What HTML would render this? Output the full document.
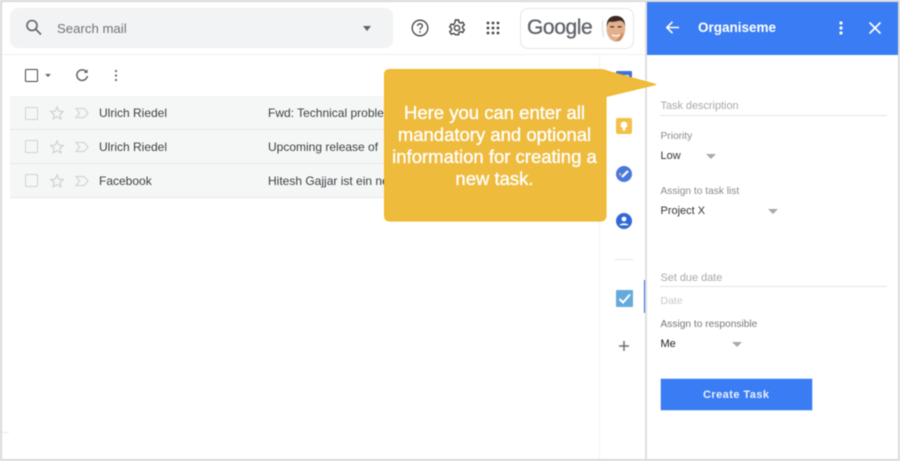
<!DOCTYPE html>
<html>
<head>
<meta charset="utf-8">
<style>
html,body{margin:0;padding:0;background:#fff}
#p{position:relative;width:900px;height:461px;overflow:hidden;background:#fff;font-family:"Liberation Sans",sans-serif;filter:blur(.45px)}
.a{position:absolute}
.t{position:absolute;white-space:nowrap;line-height:16px}
svg{position:absolute;overflow:visible}
.row{position:absolute;left:10px;width:590px;height:33px;background:#f5f7f7;border-bottom:1px solid #e6e8e8}
.m{font-size:12px;color:#3c4043;letter-spacing:0}
.l{font-size:10.2px;color:#8b8b8b;letter-spacing:0}
.v{font-size:11px;color:#333}
.ph{font-size:10.9px;color:#a8a8a8;letter-spacing:0}
.line{position:absolute;left:660px;width:227px;height:1px;background:#e4e4e4}
.tri{position:absolute;width:0;height:0;border-left:5px solid transparent;border-right:5px solid transparent;border-top:5px solid #a9a9a9}
</style>
</head>
<body>
<div id="p">
  <!-- search -->
  <div class="a" style="left:10px;top:8px;width:383px;height:40px;background:#f1f3f4;border-radius:8px"></div>
  <svg style="left:24px;top:17px" width="20" height="20" viewBox="0 0 20 20" fill="none" stroke="#5f6368" stroke-width="1.6"><circle cx="8" cy="8.5" r="5"/><path d="M11.7 12.2L17 17.5"/></svg>
  <div class="t" style="left:57px;top:20.500px;font-size:13.200px;color:#70757a">Search mail</div>
  <div class="tri" style="left:363px;top:26px;border-top-color:#5f6368;border-left-width:4.5px;border-right-width:4.5px"></div>

  <!-- top icons -->
  <svg style="left:410px;top:18px" width="20" height="20" viewBox="0 0 20 20" fill="none" stroke="#444" stroke-width="1.3"><circle cx="10" cy="10" r="7.8"/><path d="M7.5 8C7.5 6.5 8.7 5.8 10 5.8S12.4 6.7 12.4 8C12.4 9.8 10 9.800 10 11.800"/><path d="M10 13.2v1.6"/></svg>
  <svg style="left:447px;top:18px" width="20" height="20" viewBox="0 0 20 20" fill="none" stroke="#444" stroke-width="1.4"><circle cx="10" cy="10" r="2.6"/><path d="M8.4 2h3.2l.4 2.3 1.5.8 2.2-.9 1.6 2.8-1.8 1.5v1.7l1.8 1.5-1.6 2.8-2.2-.9-1.5.8-.4 2.3H8.4L8 16.2l-1.5-.8-2.2.9-1.6-2.8 1.8-1.5V10.300L2.7 8.800l1.6-2.8 2.2.9L8 4.300z"/></svg>
  <svg style="left:486px;top:21px" width="14" height="14" viewBox="0 0 14 14" fill="#444"><circle cx="2" cy="2" r="1.4"/><circle cx="7" cy="2" r="1.4"/><circle cx="12" cy="2" r="1.4"/><circle cx="2" cy="7" r="1.4"/><circle cx="7" cy="7" r="1.4"/><circle cx="12" cy="7" r="1.4"/><circle cx="2" cy="12" r="1.4"/><circle cx="7" cy="12" r="1.4"/><circle cx="12" cy="12" r="1.4"/></svg>

  <!-- account -->
  <div class="a" style="left:520px;top:8px;width:112px;height:39px;border:1px solid #e6e6e6;border-radius:8px;box-sizing:content-box"></div>
  <div class="t" style="left:527px;top:14px;font-size:21px;line-height:27px;color:#5f6368;letter-spacing:-.4px;-webkit-text-stroke:.3px #5f6368">Google</div>
  <svg style="left:601px;top:15px" width="26" height="28" viewBox="0 0 26 30">
    <path d="M1 6Q0 14 2 24" stroke="#e4e4e4" stroke-width="1.5" fill="none"/>
    <ellipse cx="15" cy="15" rx="10" ry="13.5" fill="#e2b08c"/>
    <path d="M5 13Q5 1 15 1T25 13Q24 6 19 6 12 8 8 7 6 9 5 13Z" fill="#3a2a22"/>
    <path d="M22 18Q24 24 19 28L14 28Q20 24 22 18Z" fill="#c98a5c"/>
    <rect x="9" y="12" width="4" height="1.4" fill="#4a3024"/><rect x="17" y="12" width="4" height="1.4" fill="#4a3024"/>
    <path d="M11 21Q15 24 19 21" stroke="#fff" stroke-width="1.4" fill="none"/>
  </svg>

  <!-- dividers -->
  <div class="a" style="left:2px;top:54px;width:645px;height:1px;background:#efefef"></div>
  <div class="a" style="left:599px;top:55px;width:1px;height:406px;background:#f1f1f1"></div>
  <div class="a" style="left:2px;top:432px;width:7px;height:1px;background:#ececec"></div>

  <!-- toolbar -->
  <div class="a" style="left:25px;top:69px;width:10.5px;height:10.5px;border:1.4px solid #444;border-radius:1.5px"></div>
  <div class="tri" style="left:45px;top:74px;border-left-width:3.5px;border-right-width:3.5px;border-top-width:3.5px;border-top-color:#5f6368"></div>
  <svg style="left:75px;top:68px" width="14" height="14" viewBox="0 0 14 14" fill="none" stroke="#5f6368" stroke-width="1.5"><path d="M11.6 4.2A5.3 5.3 0 1 0 12.4 8"/><path d="M12.6 1.2V5H8.8" fill="#5f6368" stroke="none"/></svg>
  <svg style="left:114px;top:69px" width="4" height="14" viewBox="0 0 4 14" fill="#5f6368"><circle cx="2" cy="2" r="1.1"/><circle cx="2" cy="6.5" r="1.1"/><circle cx="2" cy="11" r="1.1"/></svg>

  <!-- rows -->
  <div class="row" style="top:96px"></div>
  <div class="row" style="top:130px"></div>
  <div class="row" style="top:164px"></div>

  <div class="a" style="left:25px;top:107px;width:10.5px;height:10.5px;border:1.3px solid #cfd1d2;border-radius:1.5px"></div>
  <div class="a" style="left:25px;top:140px;width:10.5px;height:10.5px;border:1.3px solid #cfd1d2;border-radius:1.5px"></div>
  <div class="a" style="left:25px;top:174px;width:10.5px;height:10.5px;border:1.3px solid #cfd1d2;border-radius:1.5px"></div>

  <svg style="left:50px;top:106px" width="14" height="14" viewBox="0 0 14 14" fill="none" stroke="#cfd1d2" stroke-width="1.2"><path d="M7 1l1.8 4.1 4.5.4-3.4 3 1 4.4L7 10.6l-3.9 2.3 1-4.4-3.4-3 4.5-.4z"/></svg>
  <svg style="left:50px;top:140px" width="14" height="14" viewBox="0 0 14 14" fill="none" stroke="#cfd1d2" stroke-width="1.2"><path d="M7 1l1.8 4.1 4.5.4-3.4 3 1 4.4L7 10.6l-3.9 2.3 1-4.4-3.4-3 4.5-.4z"/></svg>
  <svg style="left:50px;top:174px" width="14" height="14" viewBox="0 0 14 14" fill="none" stroke="#cfd1d2" stroke-width="1.2"><path d="M7 1l1.8 4.1 4.5.4-3.4 3 1 4.4L7 10.6l-3.9 2.3 1-4.4-3.4-3 4.5-.4z"/></svg>

  <svg style="left:75px;top:107px" width="14" height="12" viewBox="0 0 14 12" fill="none" stroke="#d2d4d5" stroke-width="1.2"><path d="M1 1.5h8L13 6l-4 4.5H1L4.5 6z"/></svg>
  <svg style="left:75px;top:141px" width="14" height="12" viewBox="0 0 14 12" fill="none" stroke="#d2d4d5" stroke-width="1.2"><path d="M1 1.5h8L13 6l-4 4.5H1L4.5 6z"/></svg>
  <svg style="left:75px;top:175px" width="14" height="12" viewBox="0 0 14 12" fill="none" stroke="#d2d4d5" stroke-width="1.2"><path d="M1 1.5h8L13 6l-4 4.5H1L4.5 6z"/></svg>

  <div class="t m" style="left:99px;top:105px">Ulrich Riedel</div>
  <div class="t m" style="left:99px;top:139px">Ulrich Riedel</div>
  <div class="t m" style="left:99px;top:172.500px">Facebook</div>
  <div class="t m" style="left:268px;top:105px">Fwd: Technical problem</div>
  <div class="t m" style="left:268px;top:139px">Upcoming release of</div>
  <div class="t m" style="left:268px;top:172.500px">Hitesh Gajjar ist ein neuer</div>

  <!-- side icons -->
  <div class="a" style="left:616px;top:71px;width:16px;height:16px;background:#3f72d8;border-radius:1px"></div>
  <div class="a" style="left:619px;top:75px;width:10px;height:9px;background:#dfe8fa"></div>
  <div class="a" style="left:616px;top:118px;width:16px;height:16px;background:#f3c048;border-radius:2px"></div>
  <svg style="left:616px;top:118px" width="16" height="16" viewBox="0 0 16 16" fill="#fff"><circle cx="8" cy="7" r="3.4"/><rect x="6.5" y="10.5" width="3" height="2"/></svg>
  <svg style="left:616px;top:166px" width="16" height="16" viewBox="0 0 16 16"><circle cx="8" cy="8" r="8" fill="#4a78e0"/><path d="M6 11L12 5" stroke="#fff" stroke-width="2.2"/><circle cx="4.2" cy="8.2" r="1.2" fill="#f3c048"/></svg>
  <svg style="left:616px;top:213px" width="16" height="16" viewBox="0 0 16 16"><circle cx="8" cy="8" r="8" fill="#2f68d8"/><circle cx="8" cy="6" r="2.4" fill="#fff"/><path d="M3.6 12.2C4 9.8 12 9.800 12.4 12.2z" fill="#fff"/></svg>
  <div class="a" style="left:615px;top:259px;width:18px;height:1px;background:#e3e3e3"></div>
  <div class="a" style="left:616px;top:290px;width:17px;height:17px;background:#64aadb;border-radius:1px"></div>
  <svg style="left:616px;top:290px" width="17" height="17" viewBox="0 0 17 17" fill="none" stroke="#fff" stroke-width="2"><path d="M3.5 9L7 12.5 14 4.5"/></svg>
  <div class="a" style="left:644px;top:280px;width:2px;height:33px;background:#2f68d8"></div>
  <svg style="left:618px;top:340px" width="12" height="12" viewBox="0 0 12 12" stroke="#6f6f6f" stroke-width="1.5"><path d="M6 1v10M1 6h10"/></svg>

  <!-- panel -->
  <div class="a" style="left:645px;top:2px;width:2px;height:459px;background:#e0e0e0"></div>
  <div class="a" style="left:647px;top:2px;width:251px;height:53px;background:#3a7cf3"></div>
  <svg style="left:665px;top:20px" width="15" height="15" viewBox="0 0 15 15" fill="none" stroke="#fff" stroke-width="1.6"><path d="M14 7.5H2M7.5 1.8L1.8 7.5l5.7 5.7"/></svg>
  <div class="t" style="left:698px;top:20px;font-size:13.500px;font-weight:700;color:#fff;letter-spacing:0">Organiseme</div>
  <svg style="left:839px;top:21px" width="4" height="14" viewBox="0 0 4 14" fill="#fff"><circle cx="2" cy="2" r="1.6"/><circle cx="2" cy="7" r="1.6"/><circle cx="2" cy="12" r="1.6"/></svg>
  <svg style="left:869px;top:22px" width="12" height="12" viewBox="0 0 12 12" stroke="#fff" stroke-width="1.7"><path d="M.5.5l11 11M11.5.5l-11 11"/></svg>

  <div class="t ph" style="left:660.500px;top:98px">Task description</div>
  <div class="line" style="top:115px"></div>
  <div class="t l" style="left:660.500px;top:129px">Priority</div>
  <div class="t v" style="left:660.500px;top:148px">Low</div>
  <div class="tri" style="left:705.500px;top:154px"></div>
  <div class="t l" style="left:660.500px;top:184px">Assign to task list</div>
  <div class="t v" style="left:660.500px;top:203px">Project X</div>
  <div class="tri" style="left:768px;top:209px"></div>
  <div class="t ph" style="left:660.500px;top:270px">Set due date</div>
  <div class="line" style="top:286px"></div>
  <div class="t" style="left:660.500px;top:293px;font-size:10.500px;color:#c9c9c9">Date</div>
  <div class="t l" style="left:660.500px;top:317px;color:#777">Assign to responsible</div>
  <div class="t v" style="left:660.500px;top:336px;color:#222">Me</div>
  <div class="tri" style="left:731.500px;top:342px"></div>
  <div class="a" style="left:660.500px;top:379px;width:151.500px;height:31px;background:#3a7cf3;box-shadow:0 0 0 .5px #9cc0f8;color:#eaf2ff;font-size:11px;font-weight:700;text-align:center;line-height:33px;letter-spacing:.45px">Create Task</div>

  <!-- callout -->
  <svg style="left:380px;top:65px" width="282" height="160" viewBox="0 0 282 160">
    <path d="M10 4.5H220Q224 4.5 227 6L276 19.5 226 31.5V150Q226 156 220 156H10Q4.5 156 4.5 150V10Q4.5 4.5 10 4.5Z" fill="#eebb3d" stroke="#f2b71c" stroke-width="1"/>
  </svg>
  <div class="a" style="left:384px;top:102px;width:221px;text-align:center;color:#fff;font-size:18.500px;line-height:22px;-webkit-text-stroke:.35px #fff">Here you can enter all<br>mandatory and optional<br>information for creating a<br>new task.</div>

  <!-- outer frame -->
  <div class="a" style="left:0;top:0;width:900px;height:461px;box-sizing:border-box;border:2px solid #d9d9d9;pointer-events:none"></div>
</div>
</body>
</html>
